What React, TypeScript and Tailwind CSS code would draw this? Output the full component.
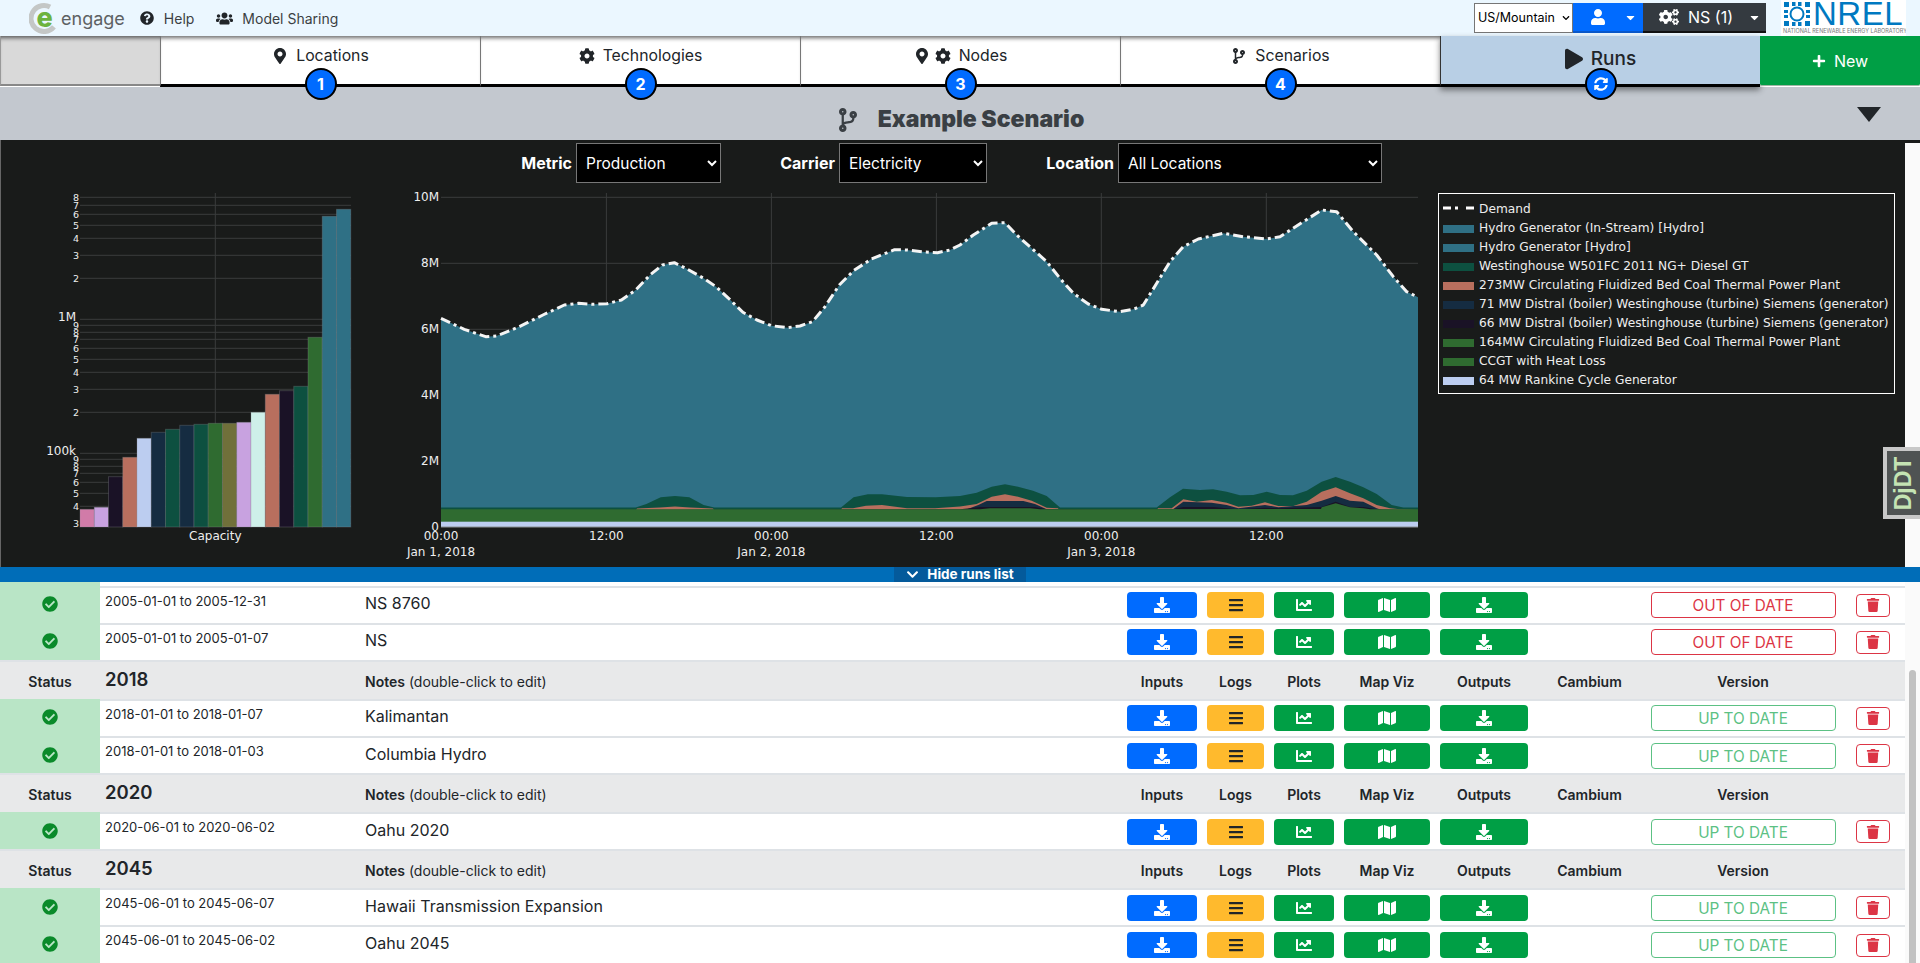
import {
  FaBars,
  FaCaretDown,
  FaChartLine,
  FaCheckCircle,
  FaChevronDown,
  FaCodeBranch,
  FaCog,
  FaCogs,
  FaDownload,
  FaMap,
  FaMapMarkerAlt,
  FaPlay,
  FaPlus,
  FaQuestionCircle,
  FaSyncAlt,
  FaTrash,
  FaUser,
  FaUsers,
} from "react-icons/fa";
import type { ReactNode } from "react";

const rowGrid = "grid grid-cols-[100px_265px_757px_80px_67px_70px_96px_98px_113px_194px_65px]";

const minorTicks = [197.3, 205.3, 214.3, 225.3, 238.3, 255.3, 278.3, 325.3, 332.3, 339.3, 348.3, 359.3, 372.3, 389.3, 412.3, 459.3, 466.3, 473.3, 482.3, 493.3, 506.3, 523.3];
const minorLabels = ["8", "7", "6", "5", "4", "3", "2", "9", "8", "7", "6", "5", "4", "3", "2", "9", "8", "7", "6", "5", "4", "3"];

const bars = [
  { top: 509.3, color: "#d17ba8" },
  { top: 507.3, color: "#c8a2e0" },
  { top: 476.7, color: "#1a1226" },
  { top: 457.3, color: "#b86f5e" },
  { top: 438.3, color: "#bccdf0" },
  { top: 432.3, color: "#152c41" },
  { top: 429.3, color: "#0d5040" },
  { top: 425.3, color: "#152c41" },
  { top: 424.3, color: "#0d5040" },
  { top: 423.3, color: "#2f6b30" },
  { top: 423.3, color: "#70703a" },
  { top: 422.3, color: "#c8a2e0" },
  { top: 412.3, color: "#ceefe9" },
  { top: 394.3, color: "#b86f5e" },
  { top: 390.7, color: "#1a1226" },
  { top: 386.3, color: "#0d5040" },
  { top: 337.3, color: "#2f6b30" },
  { top: 216.3, color: "#2f7085" },
  { top: 209.3, color: "#2f7085" },
];

const demand =
  "441,318.3 464.3,329.3 485.7,336.7 496.4,336 517.9,327.3 542.9,315 564.3,305 578.6,303.3 592.9,304.3 607,303.7 621.4,300 635.7,290 650,275 662.5,265 674.3,262.7 685.7,268.3 703.6,278.3 716,286.7 728.6,298.3 742.9,312.3 757,320 771.4,325.7 787.5,327.7 800,326 812.5,321.7 825,306.7 839.3,285 853.6,270.7 871.4,259 894.6,249.7 907,250 925,252 937.5,252.7 950,250 960,245 973.3,235 991.7,223.3 1005,222.7 1016.7,235 1031.7,248.3 1046.7,261.7 1060,278.3 1073.3,293.3 1088.3,304 1101.7,309.3 1120,311.7 1133.3,309.3 1143.3,305 1156.7,283.3 1170,261.7 1183.3,246.7 1198.3,239 1223.3,233.3 1243.3,236.7 1266.7,239 1280,236.7 1303.3,221.7 1321.7,210 1336.7,211.7 1353.3,231.7 1376.7,255 1393.3,276.7 1406.7,291.7 1418,297.3";

const peaker =
  "441,507.5 635.7,507.5 646.4,504 660.7,497.3 675,496 689.3,497.3 703.6,505 714.3,507.5 841,507.5 853.6,497.3 867.9,494.3 882,494.3 907,497 935.7,497.3 960,496 976.7,492.7 991.7,486.7 1005,484.3 1018,486.7 1033,490.7 1046.7,496 1060,507.5 1156.7,507.5 1170,497.3 1183,488.7 1200,490 1213,489.3 1226.7,491.7 1240,495.3 1253.3,495 1266.7,491.7 1280,495 1293,495.3 1306.7,490.7 1321.7,481.7 1335.7,477 1350,481.7 1363.3,487.3 1376.7,494 1391.7,505 1403.3,507.5 1418,507.5";

const coal =
  "441,510 636,510 637,508.5 660,507.5 675,506.5 690,507.5 713,508.5 714,510 841,510 842,508.3 853,508.3 866,505.7 882,505 907,508.3 935,508.3 960,506.5 976.7,504 991.7,496.7 1005,494.3 1018,496.7 1031.7,500.7 1046.7,507.7 1058,508.3 1059,510 1157,510 1158,508.3 1171.7,508.3 1183.3,499.3 1196.7,501.7 1211.7,500 1226.7,502.7 1238.3,506.7 1251.7,505.7 1265,502.3 1278.3,506 1293.3,506 1306.7,501.7 1321.7,491.7 1335.7,487.3 1350,493.3 1363.3,498.3 1376.7,505 1390,508.3 1400,509.3 1418,510";

const distral =
  "441,510 965,510 978.3,505 986.7,501 1005,501 1023.3,501 1035,504 1046.7,509.3 1173,509.3 1183.3,501.7 1211.7,502.7 1226.7,505 1238.3,508.3 1265,505 1278.3,507.3 1306.7,505 1321.7,500.7 1335.7,496 1350,500.7 1363.3,501.7 1376.7,508.3 1382,510 1418,510";

const distralSmall =
  "441,510 960,509.3 970,508.3 980,507 1035,507 1046.7,509.3 1173,509.3 1183.3,507 1213.3,507 1236.7,509.3 1265,507.7 1280,508.3 1321.7,507 1335.7,501.7 1350,507 1363.3,507 1376.7,509.3 1418,510";

const ccgt = "441,509.3 980,509.3 990,508.3 1030,508.3 1040,509.3 1321,509 1321.7,507.3 1335.7,503.3 1350,507.3 1363.3,508.3 1370,509.3 1418,509.3";

const legend = [
  { label: "Hydro Generator (In-Stream) [Hydro]", color: "bg-[#2f7085]" },
  { label: "Hydro Generator [Hydro]", color: "bg-[#2f7085]" },
  { label: "Westinghouse W501FC 2011 NG+ Diesel GT", color: "bg-[#0d5040]" },
  { label: "273MW Circulating Fluidized Bed Coal Thermal Power Plant", color: "bg-[#b86f5e]" },
  { label: "71 MW Distral (boiler) Westinghouse (turbine) Siemens (generator)", color: "bg-[#152c41]" },
  { label: "66 MW Distral (boiler) Westinghouse (turbine) Siemens (generator)", color: "bg-[#1a1226]" },
  { label: "164MW Circulating Fluidized Bed Coal Thermal Power Plant", color: "bg-[#2f6b30]" },
  { label: "CCGT with Heat Loss", color: "bg-[#2f6b30]" },
  { label: "64 MW Rankine Cycle Generator", color: "bg-[#bccdf0]" },
];

const sections = [
  {
    year: null,
    runs: [
      { dates: "2005-01-01 to 2005-12-31", note: "NS 8760", current: false },
      { dates: "2005-01-01 to 2005-01-07", note: "NS", current: false },
    ],
  },
  {
    year: "2018",
    runs: [
      { dates: "2018-01-01 to 2018-01-07", note: "Kalimantan", current: true },
      { dates: "2018-01-01 to 2018-01-03", note: "Columbia Hydro", current: true },
    ],
  },
  {
    year: "2020",
    runs: [{ dates: "2020-06-01 to 2020-06-02", note: "Oahu 2020", current: true }],
  },
  {
    year: "2045",
    runs: [
      { dates: "2045-06-01 to 2045-06-07", note: "Hawaii Transmission Expansion", current: true },
      { dates: "2045-06-01 to 2045-06-02", note: "Oahu 2045", current: true },
    ],
  },
];

function Tab({ icon, label, badge }: { icon: ReactNode; label: string; badge: string }) {
  return (
    <div className="relative w-[320px] h-[51px] bg-white border-l border-[#777] border-b-[3px] border-b-black shadow-[inset_0_5px_4px_-3px_rgba(0,0,0,0.6)] flex items-start justify-center gap-2 pt-[10px] text-[15.8px] leading-[20px] text-[#212529]">
      <span className="flex items-center gap-[5px] h-[20px]">{icon}</span>
      <span>{label}</span>
      <Badge>{badge}</Badge>
    </div>
  );
}

function Badge({ children }: { children: ReactNode }) {
  return (
    <div className="absolute left-1/2 -translate-x-1/2 top-[32px] w-[32px] h-[32px] rounded-full bg-[#006bff] border-2 border-black text-white font-bold text-[16px] flex items-center justify-center z-20">
      {children}
    </div>
  );
}

function BarChart() {
  return (
    <svg width="400" height="384" viewBox="0 183 400 384" className="shrink-0">
      {minorTicks.map((y) => (
        <line key={y} x1="80" x2="351" y1={y} y2={y} stroke="#3a3c3c" />
      ))}
      <line x1="80" x2="351" y1="319.3" y2="319.3" stroke="#3a3c3c" />
      <line x1="80" x2="351" y1="453.3" y2="453.3" stroke="#3a3c3c" />
      <line x1="215.3" x2="215.3" y1="193" y2="527" stroke="#3a3c3c" />
      {bars.map((bar, i) => (
        <rect
          key={i}
          x={80 + i * 14.25}
          y={bar.top}
          width="14.25"
          height={527 - bar.top}
          fill={bar.color}
          stroke="#8a8f92"
          strokeOpacity="0.3"
          strokeWidth="1"
        />
      ))}
      {minorTicks.map((y, i) => (
        <text key={y} x="79" y={y + 3.5} textAnchor="end" fontSize="9.5" fill="#eee">
          {minorLabels[i]}
        </text>
      ))}
      <text x="76" y="321" textAnchor="end" fontSize="12" fill="#eee">1M</text>
      <text x="76" y="455" textAnchor="end" fontSize="12" fill="#eee">100k</text>
      <text x="215.3" y="540" textAnchor="middle" fontSize="12" fill="#eee">Capacity</text>
    </svg>
  );
}

function closeArea(points: string) {
  return `${points} 1418,527 441,527`;
}

function AreaChart() {
  return (
    <svg width="1030" height="384" viewBox="400 183 1030 384" className="shrink-0">
      {[197.3, 263.3, 329.3, 395.3, 461.3].map((y) => (
        <line key={y} x1="441" x2="1418" y1={y} y2={y} stroke="#3a3c3c" />
      ))}
      {[606.4, 771.4, 936.4, 1101.3, 1266.3].map((x) => (
        <line key={x} x1={x} x2={x} y1="193" y2="527" stroke="#3a3c3c" />
      ))}
      <polygon points={closeArea(demand)} fill="#2f7085" />
      <polygon points={closeArea(peaker)} fill="#0d5040" />
      <polygon points={closeArea(coal)} fill="#b86f5e" />
      <polygon points={closeArea(distral)} fill="#152c41" />
      <polygon points={closeArea(distralSmall)} fill="#1a1226" />
      <polygon points={closeArea(ccgt)} fill="#2f6b30" />
      <rect x="441" y="521.7" width="977" height="5.3" fill="#bccdf0" />
      <line x1="441" x2="1418" y1="527" y2="527" stroke="#8a8f92" />
      <polyline points={demand} fill="none" stroke="#f4f4f4" strokeWidth="3" strokeDasharray="10 4 3 4" strokeLinejoin="round" />
      {[
        ["10M", 200.5],
        ["8M", 266.5],
        ["6M", 332.5],
        ["4M", 398.5],
        ["2M", 464.5],
        ["0", 531],
      ].map(([label, y]) => (
        <text key={label} x="439" y={y} textAnchor="end" fontSize="12" fill="#eee">
          {label}
        </text>
      ))}
      {[
        ["00:00", 441],
        ["12:00", 606.4],
        ["00:00", 771.4],
        ["12:00", 936.4],
        ["00:00", 1101.3],
        ["12:00", 1266.3],
      ].map(([label, x]) => (
        <text key={String(x)} x={x} y="540" textAnchor="middle" fontSize="12" fill="#eee">
          {label}
        </text>
      ))}
      {[
        ["Jan 1, 2018", 441],
        ["Jan 2, 2018", 771.4],
        ["Jan 3, 2018", 1101.3],
      ].map(([label, x]) => (
        <text key={label} x={x} y="556" textAnchor="middle" fontSize="12" fill="#eee">
          {label}
        </text>
      ))}
    </svg>
  );
}

function Legend() {
  return (
    <div className="ml-2 mt-[10px] w-[457px] h-[201px] shrink-0 border border-white px-[4px] pt-[6px] text-[12.2px] leading-[19px] text-[#eee] [font-family:'DejaVu_Sans',sans-serif]">
      <div className="flex items-center gap-[5px] h-[19px]">
        <svg width="31" height="4" className="shrink-0 -mt-[3px]">
          <line x1="0" x2="31" y1="2" y2="2" stroke="#fff" strokeWidth="3" strokeDasharray="8 4 3 8 8" />
        </svg>
        <span>Demand</span>
      </div>
      {legend.map((item) => (
        <div key={item.label} className="flex items-center gap-[5px] h-[19px] whitespace-nowrap">
          <span className={`w-[31px] h-[8px] shrink-0 ${item.color}`} />
          <span>{item.label}</span>
        </div>
      ))}
    </div>
  );
}

function ActionButton({ width, color, children }: { width: string; color: string; children: ReactNode }) {
  return <button className={`${width} ${color} h-[26px] rounded-[4px] flex items-center justify-center text-white`}>{children}</button>;
}

function RunRow({ dates, note, current }: { dates: string; note: string; current: boolean }) {
  const cell = "border-t-2 border-[#dee2e6] flex items-center justify-center";
  return (
    <div className={`${rowGrid} h-[37.33px] bg-white`}>
      <div className="bg-[#b9e5c6] flex items-center justify-center">
        <FaCheckCircle className="text-[#0a8a2a] text-[16px]" />
      </div>
      <div className="border-t-2 border-[#dee2e6] pl-[5px] pt-[3px] text-[13px] leading-[20px] text-[#212529]">{dates}</div>
      <div className="border-t-2 border-[#dee2e6] flex items-center text-[16px] text-[#212529] pb-[4px]">{note}</div>
      <div className={cell}>
        <ActionButton width="w-[70px]" color="bg-[#006bff]"><FaDownload className="text-[16px]" /></ActionButton>
      </div>
      <div className={cell}>
        <ActionButton width="w-[57px]" color="bg-[#ffba2d]"><FaBars className="text-[16px] text-[#212529]" /></ActionButton>
      </div>
      <div className={cell}>
        <ActionButton width="w-[60px]" color="bg-[#009f45]"><FaChartLine className="text-[16px]" /></ActionButton>
      </div>
      <div className={cell}>
        <ActionButton width="w-[86px]" color="bg-[#009f45]"><FaMap className="text-[18px]" /></ActionButton>
      </div>
      <div className={cell}>
        <ActionButton width="w-[88px]" color="bg-[#009f45]"><FaDownload className="text-[16px]" /></ActionButton>
      </div>
      <div className={cell} />
      <div className={cell}>
        {current ? (
          <button className="w-[185px] h-[26px] pt-[2px] rounded-[4px] border border-[#5cc184] bg-white text-[15.3px] leading-[20px] text-[#5cc184]">UP TO DATE</button>
        ) : (
          <button className="w-[185px] h-[26px] pt-[2px] rounded-[4px] border border-[#dc3545] bg-white text-[15.3px] leading-[20px] text-[#dc3545]">OUT OF DATE</button>
        )}
      </div>
      <div className={cell}>
        <button className="w-[34px] h-[23px] rounded-[4px] border border-[#dc3545] bg-white flex items-center justify-center text-[#dc3545]">
          <FaTrash className="text-[14px]" />
        </button>
      </div>
    </div>
  );
}

function HeaderRow({ year }: { year: string }) {
  const cell = "flex items-center justify-center font-semibold";
  return (
    <div className={`${rowGrid} h-[38.67px] bg-[#e8e9ea] text-[14px] text-[#212529] border-t-2 border-[#dee2e6] pt-[2px]`}>
      <div className={cell}>Status</div>
      <div className="flex items-center pl-[5px] font-semibold text-[18.5px] pb-[3px]">{year}</div>
      <div className="flex items-center">
        <span className="font-semibold">Notes</span>&nbsp;(double-click to edit)
      </div>
      <div className={cell}>Inputs</div>
      <div className={cell}>Logs</div>
      <div className={cell}>Plots</div>
      <div className={cell}>Map Viz</div>
      <div className={cell}>Outputs</div>
      <div className={cell}>Cambium</div>
      <div className={cell}>Version</div>
      <div />
    </div>
  );
}

export default function App() {
  return (
    <main className="w-full h-[963px] overflow-hidden bg-white [font-family:Inter,sans-serif]">
      {/* top bar */}
      <div className="h-[36px] bg-[#ebf7ff] flex items-center text-[14px] text-[#3b3f43]">
        <svg width="30" height="33" viewBox="0 0 30 33" className="ml-[29px] shrink-0">
          <circle cx="15" cy="16.5" r="13" fill="none" stroke="#c4c7c6" strokeWidth="5" strokeDasharray="58 24" transform="rotate(40 15 16.5)" />
          <text x="15.5" y="25" textAnchor="middle" fontSize="27" fontWeight="800" fill="#6cb33f">e</text>
        </svg>
        <span className="ml-[2px] text-[18px] text-[#5d6163]">engage</span>
        <FaQuestionCircle className="ml-[15px] text-[14px] text-[#212529]" />
        <span className="ml-[10px]">Help</span>
        <FaUsers className="ml-[22px] text-[17px] text-[#212529]" />
        <span className="ml-[9px]">Model Sharing</span>

        <div className="relative ml-auto w-[99px] h-[30px] shrink-0">
          <select className="appearance-none w-full h-full bg-white border border-[#767676] pl-[3px] pr-0 text-[12.5px] text-black">
            <option>US/Mountain</option>
          </select>
          <FaChevronDown className="absolute right-[3px] top-[11px] text-[8px] text-black pointer-events-none" />
        </div>
        <div className="w-[70px] h-[30px] bg-[#006bff] border-b-2 border-[#0a58ca] flex items-center text-white">
          <FaUser className="ml-[17px] text-[16px]" />
          <FaCaretDown className="ml-[18px] text-[13px]" />
        </div>
        <div className="w-[123px] h-[30px] bg-[#343a40] border-b-2 border-[#111] flex items-center text-white text-[16px]">
          <FaCogs className="ml-[16px] text-[20px]" />
          <span className="ml-[9px]">NS (1)</span>
          <FaCaretDown className="ml-[15px] text-[13px]" />
        </div>
        <div className="ml-[15px] mr-[14px] w-[125px] h-[36px] bg-white shrink-0 text-[#0079c1] px-[2px] overflow-hidden">
          <div className="flex items-center h-[27px]">
            <svg width="28" height="26" viewBox="0 0 28 26" className="shrink-0">
              <g fill="#0079c1">
                <rect x="1" y="1" width="5" height="5" />
                <rect x="9" y="1" width="3.5" height="4" />
                <rect x="15" y="1" width="3.5" height="4" />
                <rect x="22" y="1" width="5" height="5" />
                <rect x="1" y="9" width="4" height="3" />
                <rect x="23" y="9" width="4" height="3" />
                <rect x="1" y="14" width="4" height="3" />
                <rect x="23" y="14" width="4" height="3" />
                <rect x="1" y="20" width="5" height="5" />
                <rect x="9" y="21" width="3.5" height="4" />
                <rect x="15" y="21" width="3.5" height="4" />
                <rect x="22" y="20" width="5" height="5" />
              </g>
              <circle cx="14" cy="13" r="6.5" fill="none" stroke="#0079c1" strokeWidth="2" />
            </svg>
            <span className="ml-[2px] text-[33px] leading-[27px] [font-family:'Liberation_Sans',sans-serif] tracking-[0.5px]">NREL</span>
          </div>
          <div className="text-[5.5px] leading-[7px] whitespace-nowrap text-[#777] mt-[1px]">NATIONAL RENEWABLE ENERGY LABORATORY</div>
        </div>
      </div>

      {/* step tabs */}
      <div className="flex h-[51px]">
        <div className="w-[160px] h-[50px] bg-[#d9d9d9] border-l border-[#999] border-b-2 border-b-[#888] shadow-[inset_0_5px_4px_-3px_rgba(0,0,0,0.6)]" />
        <Tab icon={<FaMapMarkerAlt className="text-[16px]" />} label="Locations" badge="1" />
        <Tab icon={<FaCog className="text-[16px]" />} label="Technologies" badge="2" />
        <Tab
          icon={
            <>
              <FaMapMarkerAlt className="text-[16px]" />
              <FaCog className="text-[16px]" />
            </>
          }
          label="Nodes"
          badge="3"
        />
        <Tab icon={<FaCodeBranch className="text-[16px]" />} label="Scenarios" badge="4" />
        <div className="relative z-10 w-[320px] h-[51px] bg-[#b8cfe5] border-l border-[#333] border-b-[3px] border-b-black shadow-[0_3px_6px_rgba(0,0,0,0.45)] flex items-start justify-center gap-2 pt-[11px] text-[19px] leading-[24px] font-medium text-[#212529]">
          <FaPlay className="text-[18px] h-[24px]" />
          <span>Runs</span>
          <Badge>
            <FaSyncAlt className="text-[14px]" />
          </Badge>
        </div>
        <div className="relative z-10 w-[160px] h-[50px] bg-[#009f45] border-b border-[#9fb6a5] rounded-b-[2px] flex items-center justify-center gap-2 pt-[1px] text-white text-[16px]">
          <FaPlus className="text-[14px]" />
          <span>New</span>
        </div>
      </div>

      {/* scenario title */}
      <div className="h-[53px] bg-[#c3c8cf] grid grid-cols-[1fr_auto_1fr] items-center text-[#3a3f44]">
        <div />
        <div className="flex items-center gap-[18px] pt-[12px]">
          <FaCodeBranch className="text-[24px]" />
          <span className="text-[23px] font-black">Example Scenario</span>
        </div>
        <svg width="24" height="15" viewBox="0 0 24 15" className="justify-self-end mr-[39px] mt-[2px]">
          <polygon points="0,0 24,0 12,15" fill="#212529" />
        </svg>
      </div>

      {/* charts */}
      <div className="h-[427px] bg-[#191b1a] shadow-[inset_1px_0_0_#666] flex">
        <div className="w-[1905px] shrink-0">
          <div className="h-[43px] pt-[3px] flex text-[16px] text-white">
            <span className="ml-[520px] w-[52px] h-[40px] flex items-center justify-end font-bold">Metric</span>
            <select className="ml-[4px] w-[145px] h-[40px] bg-black border border-[#777] pl-[5px] pr-[6px] text-[15.5px] text-white">
              <option>Production</option>
            </select>
            <span className="ml-[60px] w-[54px] h-[40px] flex items-center justify-end font-bold">Carrier</span>
            <select className="ml-[4px] w-[148px] h-[40px] bg-black border border-[#777] pl-[5px] pr-[6px] text-[15.5px] text-white">
              <option>Electricity</option>
            </select>
            <span className="ml-[60px] w-[67px] h-[40px] flex items-center justify-end font-bold">Location</span>
            <select className="ml-[4px] w-[264px] h-[40px] bg-black border border-[#777] pl-[5px] pr-[6px] text-[15.5px] text-white">
              <option>All Locations</option>
            </select>
          </div>
          <div className="flex [font-family:'DejaVu_Sans',sans-serif]">
            <BarChart />
            <AreaChart />
            <Legend />
          </div>
        </div>
        <div className="flex-1 mt-[3px] bg-[#fafafa]" />
      </div>

      {/* hide runs bar */}
      <div className="h-[15px] bg-[#006db8] flex justify-center">
        <div className="w-[132px] bg-[#045a9b] flex items-center justify-center gap-[8px] text-white text-[13.5px] leading-[15px] font-bold">
          <FaChevronDown className="text-[13px]" />
          <span>Hide runs list</span>
        </div>
      </div>

      {/* runs table */}
      <div className="flex">
        <div className="w-[1905px] shrink-0">
          <div className={`${rowGrid} h-[3.5px] bg-white`}>
            <div className="bg-[#b9e5c6]" />
          </div>
          {sections.map((section) => (
            <div key={section.year ?? "2005"}>
              {section.year && <HeaderRow year={section.year} />}
              {section.runs.map((run) => (
                <RunRow key={run.dates} {...run} />
              ))}
            </div>
          ))}
        </div>
        <div className="flex-1 bg-[#fafafa] pt-[88px] flex justify-center">
          <div className="w-[7px] h-[300px] rounded-full bg-[#c1c1c1]" />
        </div>
      </div>

      {/* debug toolbar handle */}
      <div className="fixed right-0 top-[447px] w-[37px] h-[72px] bg-[#4f5353] border-4 border-r-0 border-[#c8c8c8] flex items-center justify-center">
        <span className="-rotate-90 text-[#c4e3b3] font-bold text-[23px] leading-none [font-family:'Liberation_Sans',sans-serif]">DjDT</span>
      </div>
    </main>
  );
}
